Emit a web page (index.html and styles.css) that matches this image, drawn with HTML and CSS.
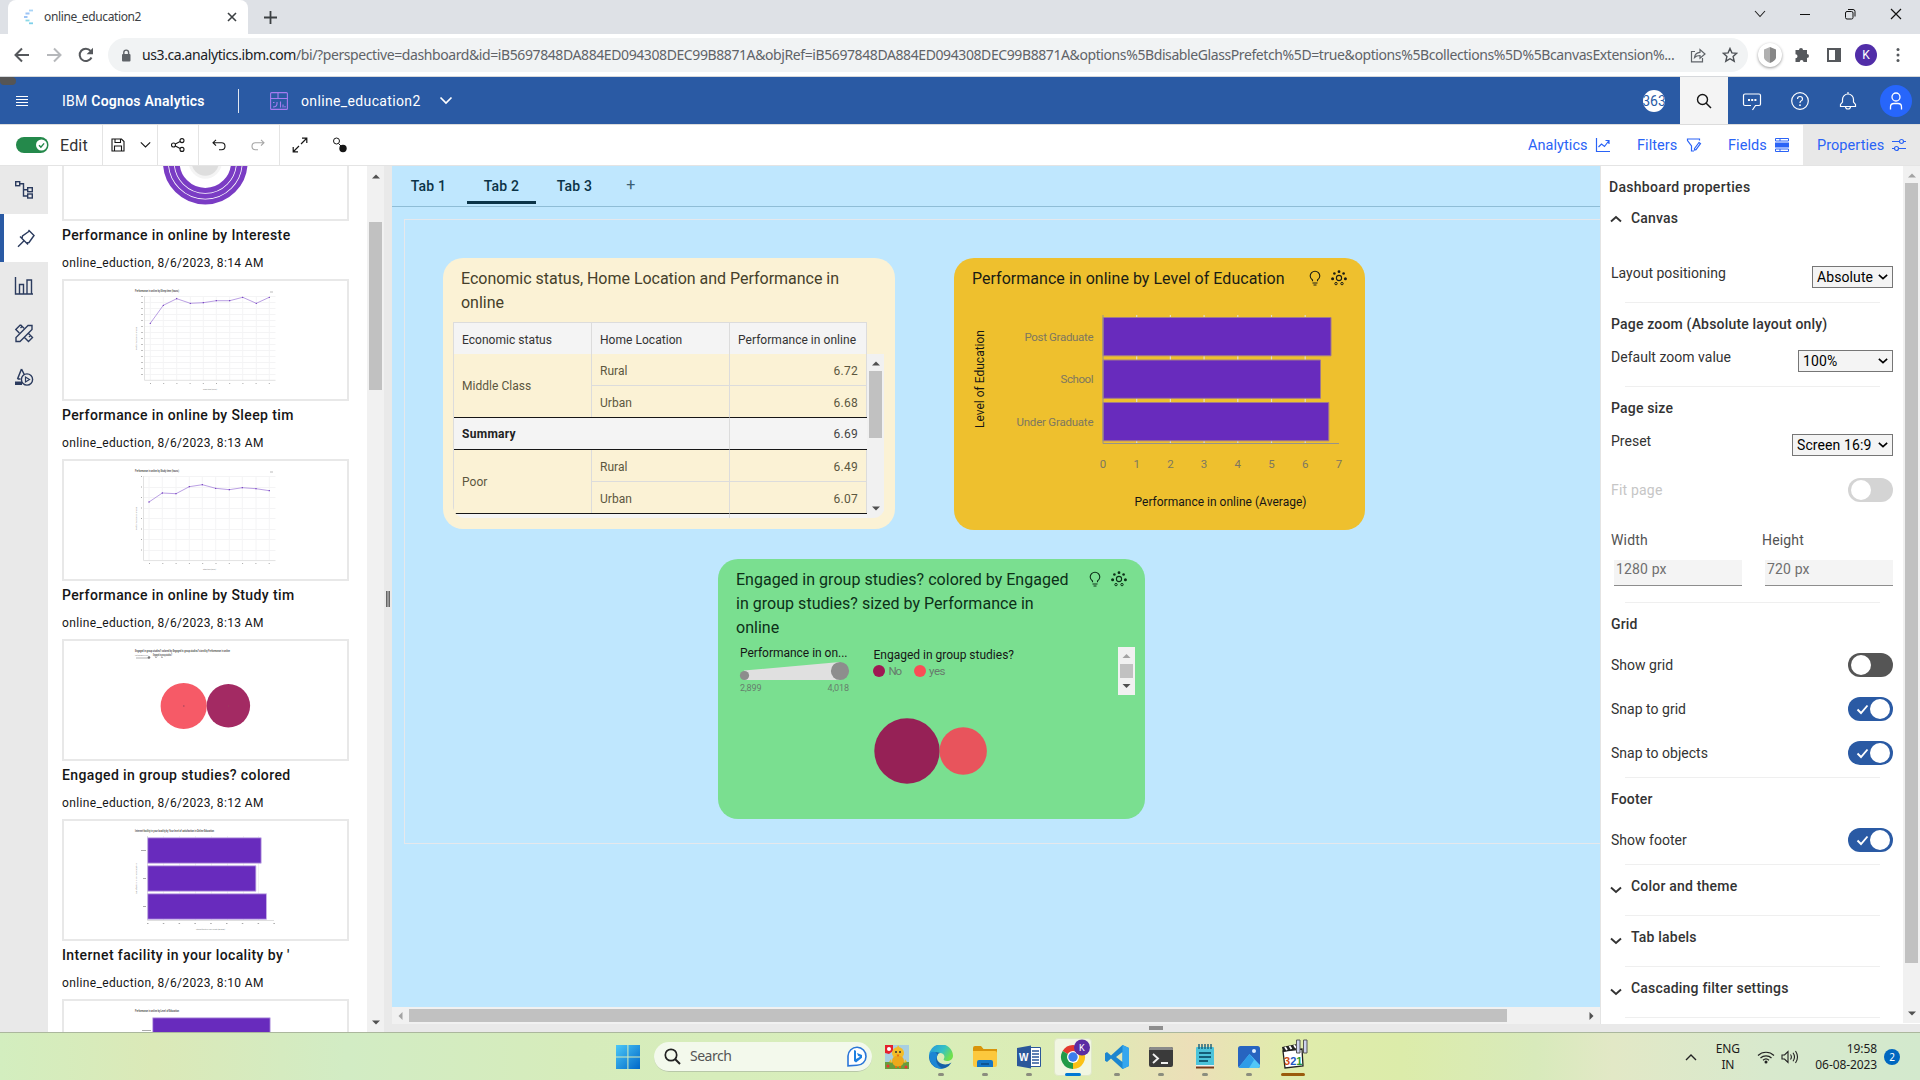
FILE: index.html
```html
<!DOCTYPE html>
<html lang="en">
<head>
<meta charset="utf-8">
<title>online_education2</title>
<link rel="stylesheet" href="styles.css">
</head>
<body>
<svg width="0" height="0" class="defs">
  <defs>
    <symbol id="bulb" viewBox="0 0 16 16"><path d="M5.500 11.200V10C4 8.900 3.200 7.600 3.200 6a4.800 4.800 0 0 1 9.600 0c0 1.600-.8 2.900-2.300 4v1.200M5.500 13h5M6.500 15h3" fill="none" stroke="currentColor" stroke-width="1.100"/></symbol>
    <symbol id="cluster" viewBox="0 0 16 16"><circle cx="8" cy="8" r="2.600" fill="none" stroke="currentColor" stroke-width="1.100"/><g fill="currentColor"><circle cx="8" cy="1.700" r="1.400"/><circle cx="3.400" cy="3.500" r="1.300"/><circle cx="12.600" cy="3.500" r="1.300"/><circle cx="1.600" cy="8.700" r="1.500"/><circle cx="14.400" cy="8.700" r="1.500"/></g><g fill="none" stroke="currentColor"><circle cx="5" cy="13.600" r="1.200"/><circle cx="11" cy="13.600" r="1.200"/></g></symbol>
    <symbol id="down" viewBox="0 0 12 12"><path d="M1 3.500 6 8l5-4.500" fill="none" stroke="currentColor" stroke-width="1.900"/></symbol>
    <symbol id="up" viewBox="0 0 12 12"><path d="M1 8.500 6 4l5 4.500" fill="none" stroke="currentColor" stroke-width="1.900"/></symbol>
  </defs>
</svg>

<div class="tabstrip">
  <div class="btab">
    <svg class="fav" width="12" height="16"><g stroke-width="1.800" fill="none"><path d="M6 1.500h4" stroke="#a8d4f7"/><path d="M2.500 4.500h4M1 8h3.500" stroke="#9cc4f5"/><path d="M2.500 11.500h4" stroke="#8bd8e6"/><path d="M6 14.300h4" stroke="#7ed0ea"/></g></svg>
    <span class="bt-title">online_education2</span>
    <svg width="10" height="10"><path d="M1 1l8 8M9 1 1 9" stroke="#3c4043" stroke-width="1.600"/></svg>
  </div>
  <svg class="newtab" width="13" height="13"><path d="M6.500 0v13M0 6.500h13" stroke="#3c4043" stroke-width="1.800"/></svg>
  <div class="winctl">
    <svg width="12" height="8"><path d="M1 1l5 5.500L11 1" fill="none" stroke="#222" stroke-width="1.100"/></svg>
    <svg width="11" height="8"><path d="M0 4.500h10" stroke="#111"/></svg>
    <svg width="11" height="11"><rect x=".5" y="2.500" width="7.500" height="7.500" rx="1.500" fill="none" stroke="#111"/><path d="M3 .5h5a2 2 0 0 1 2 2v5" fill="none" stroke="#111"/></svg>
    <svg width="12" height="12"><path d="M1 1l10 10M11 1 1 11" stroke="#111" stroke-width="1.200"/></svg>
  </div>
</div>

<div class="navbar">
  <div class="navbtns">
    <svg width="16" height="16" viewBox="0 0 16 16"><path d="M15 8H2M8 1.500 1.500 8 8 14.500" fill="none" stroke="#55585c" stroke-width="2"/></svg>
    <svg width="16" height="16" viewBox="0 0 16 16"><path d="M1 8h13M8 1.500 14.500 8 8 14.500" fill="none" stroke="#b6b8bb" stroke-width="2"/></svg>
    <svg width="16" height="16" viewBox="0 0 16 16"><path d="M13.500 10.500A6.200 6.200 0 1 1 12.600 3.800" fill="none" stroke="#55585c" stroke-width="2"/><path d="M15 .8v6.500H8.600z" fill="#55585c"/></svg>
  </div>
  <div class="url">
    <svg width="10" height="13"><rect x="1" y="5" width="8.500" height="7.500" rx="1" fill="#5f6368"/><path d="M2.800 5.500V3.500a2.400 2.400 0 0 1 4.800 0v2" fill="none" stroke="#5f6368" stroke-width="1.400"/></svg>
    <span class="urltext"><b>us3.ca.analytics.ibm.com</b>/bi/?perspective=dashboard&amp;id=iB5697848DA884ED094308DEC99B8871A&amp;objRef=iB5697848DA884ED094308DEC99B8871A&amp;options%5BdisableGlassPrefetch%5D=true&amp;options%5Bcollections%5D%5BcanvasExtension%...</span>
    <svg class="u1" width="16" height="16"><path d="M5 4.500H1.500v10.300h11V11" fill="none" stroke="#5f6368" stroke-width="1.200"/><path d="M4.500 10.500C5 7 7 5.500 10 5.300V2.500l5 4.500-5 4.300V8.500c-2.500 0-4 .4-5.500 2z" fill="none" stroke="#5f6368" stroke-width="1.200"/></svg>
    <svg width="16" height="16"><path d="M8 1.500l1.900 4.400 4.800.4-3.600 3.200 1.100 4.700L8 11.700l-4.200 2.500 1.100-4.700L1.300 6.300l4.800-.4z" fill="none" stroke="#4d5156" stroke-width="1.400"/></svg>
  </div>
  <div class="ext">
    <span class="shield"><svg width="14" height="16"><path d="M7 0 1 2.500V11q1 3 6 5z" fill="#b0b0b0"/><path d="M7 0l6 2.500V11q-1 3-6 5z" fill="#868686"/></svg></span>
    <svg width="16" height="16"><path d="M5 3a2 2 0 0 1 4 0h4v4a2 2 0 0 1 0 4v4H9.500a1.900 1.900 0 0 0-3.800 0H1.500v-3.700a2 2 0 0 0 0-4V3z" fill="#55585c"/></svg>
    <svg width="14" height="14"><rect x="1" y="1" width="12" height="12" fill="none" stroke="#55585c" stroke-width="2"/><path d="M8 1h5v12H8z" fill="#55585c"/></svg>
    <span class="kbadge">K</span>
    <svg width="4" height="16"><g fill="#55585c"><circle cx="2" cy="2.500" r="1.500"/><circle cx="2" cy="8" r="1.500"/><circle cx="2" cy="13.500" r="1.500"/></g></svg>
  </div>
</div>

<header class="appbar">
  <i class="blob"></i>
  <svg class="burger" width="12" height="12"><path d="M0 1.500h12M0 4.500h12M0 7.500h12M0 10.500h12" stroke="#fff"/></svg>
  <div class="brand">IBM <b>Cognos Analytics</b></div>
  <i class="vline"></i>
  <svg class="dash" width="18" height="18"><g fill="none" stroke="#a67cf0" stroke-width="1.100"><rect x=".6" y=".6" width="16.800" height="16.800" rx="1"/><path d="M0 6.500h18M8 .5v6M3 10.500h1.500M7 10v1.500q0 3.500-4 3.500M10.500 9.500v6M13 12.500v3M15 14v1.500"/></g></svg>
  <div class="dname">online_education2</div>
  <svg class="dchev" width="14" height="9"><path d="M1.500 1.500 7 7l5.500-5.500" fill="none" stroke="#fff" stroke-width="1.700"/></svg>
  <div class="appright">
    <span class="n363"><span>363</span></span>
    <span class="sbtn"><svg width="16" height="16"><circle cx="6.500" cy="6.500" r="5" fill="none" stroke="#161616" stroke-width="1.400"/><path d="M10 10l5 5" stroke="#161616" stroke-width="1.500"/></svg></span>
    <span class="abtn"><svg width="20" height="20" viewBox="0 0 20 20"><path d="M9 14.500H3q-1.500 0-1.500-1.500V4.500Q1.500 3 3 3h14q1.500 0 1.500 1.500V13q0 1.500-1.500 1.500h-3.500L10.500 19" fill="none" stroke="#fff" stroke-width="1.200"/><path d="M6 8h2v2H6zM9.200 8h2v2h-2zM12.400 8h2v2h-2z" fill="#fff"/></svg></span>
    <span class="abtn"><svg width="20" height="20" viewBox="0 0 20 20"><circle cx="10" cy="10" r="8.300" fill="none" stroke="#fff" stroke-width="1.200"/><path d="M7.500 8q0-2.500 2.500-2.500T12.500 8q0 1.500-1.500 2-1 .5-1 2" fill="none" stroke="#fff" stroke-width="1.200"/><circle cx="10" cy="14.200" r=".9" fill="#fff"/></svg></span>
    <span class="abtn"><svg width="20" height="20" viewBox="0 0 20 20"><path d="M10 1v2M2.500 15.500h15v-2L15.500 11V8.500a5.500 5.500 0 0 0-11 0V11l-2 2.500zM7.500 15.500a2.500 2.500 0 0 0 5 0" fill="none" stroke="#fff" stroke-width="1.200"/></svg></span>
    <span class="avatar"><svg width="20" height="20" viewBox="0 0 20 20"><circle cx="10" cy="6" r="4" fill="none" stroke="#fff" stroke-width="1.300"/><path d="M4.500 18.500V16q0-3.500 3.500-3.500h4q3.500 0 3.500 3.500v2.500" fill="none" stroke="#fff" stroke-width="1.300"/></svg></span>
  </div>
</header>

<div class="toolbar">
  <div class="tg edit">
    <svg width="33" height="16"><rect width="32.500" height="16" rx="8" fill="#24894b"/><circle cx="25.500" cy="8" r="5.500" fill="#fff"/><path d="M23 8.200l1.900 1.900 3.200-3.700" stroke="#24894b" fill="none" stroke-width="1.400"/></svg>
    <span>Edit</span>
  </div>
  <div class="tg save">
    <svg width="14" height="14"><path d="M1 1h9.500L13 3.500V13H1zM4 1v3.500h5.500V1M3.500 13V8h7v5" fill="none" stroke="#161616" stroke-width="1.100"/></svg>
    <svg width="11" height="8"><path d="M.8 1.300 5.500 6l4.700-4.700" fill="none" stroke="#161616" stroke-width="1.100"/></svg>
  </div>
  <div class="tg share"><svg width="14" height="14"><g fill="none" stroke="#161616" stroke-width="1.100"><circle cx="2.500" cy="7" r="2"/><circle cx="11" cy="2.600" r="2"/><circle cx="11" cy="11.400" r="2"/><path d="M4.300 6l4.900-2.500M4.300 8l4.900 2.500"/></g></svg></div>
  <div class="tg undo">
    <svg width="14" height="12"><path d="M4 .8 1 3.700l3 3M1 3.700h8.500Q13 3.700 13 7.200t-3.500 3.500H7" fill="none" stroke="#161616" stroke-width="1.100"/></svg>
    <svg width="14" height="12"><path d="M10 .8l3 2.900-3 3M13 3.700H4.500Q1 3.700 1 7.200t3.500 3.500H7" fill="none" stroke="#a5a5a5" stroke-width="1.100"/></svg>
  </div>
  <div class="tg last">
    <svg width="16" height="16"><path d="M10 1.200h4.800V6M6 14.800H1.200V10M14.500 1.500 9 7M1.500 14.500 7 9" fill="none" stroke="#161616" stroke-width="1.200"/></svg>
    <svg width="16" height="16"><circle cx="4.500" cy="4" r="3" fill="none" stroke="#161616"/><path d="M6.500 6.500 9 9" stroke="#161616"/><circle cx="11" cy="11.500" r="3.700" fill="#161616"/></svg>
  </div>
  <div class="tools">
    <div class="tool"><span>Analytics</span><svg width="16" height="16"><path d="M1.500 1v13.500H15M3.500 10l3-3 3 2.500 4.500-6M10.500 3.500H14V7" fill="none" stroke="#2a63f6" stroke-width="1.200"/></svg></div>
    <div class="tool"><span>Filters</span><svg width="16" height="16"><path d="M8 14H5.500V9L1.500 3.500V2h12v1.500M8.500 11.500l4.500-6 1.500 1.200-4.500 6-1.500.3z" fill="none" stroke="#2a63f6" stroke-width="1.200"/></svg></div>
    <div class="tool"><span>Fields</span><svg width="16" height="16"><path d="M1 5.500h14v5H1z" fill="#2a63f6"/><path d="M1.500 1.500h13V4h-13zM1.500 12h13v2.500h-13zM6 1.500V4M6 12v2.500" fill="none" stroke="#2a63f6"/></svg></div>
    <div class="tool on"><span>Properties</span><svg width="16" height="16"><g fill="none" stroke="#2a63f6" stroke-width="1.200"><circle cx="10.500" cy="4.500" r="2"/><circle cx="5.500" cy="11.500" r="2"/><path d="M1 4.500h7.500M12.500 4.500H15M1 11.500h2.500M7.500 11.500H15"/></g></svg></div>
  </div>
</div>

<main class="body">
  <nav class="rail">
    <div class="ri"><svg width="20" height="20"><g fill="none" stroke="#2b3b5e" stroke-width="1.400"><rect x="1.700" y="1.700" width="4" height="4"/><rect x="13.700" y="7.700" width="4.600" height="4"/><rect x="13.700" y="14" width="4.600" height="4"/><path d="M5.700 3.700H9.500V16h4.200M9.500 9.700h4.200"/></g></svg></div>
    <div class="ri on"><svg width="20" height="20"><path d="M12.500 2l6 6M13.500 3 6.500 8l-.5 2.500 4.500 4.500 2.500-.5 5-7M4 8.500l8 8M8 12.700 2 18.700" fill="none" stroke="#2b3b5e" stroke-width="1.400"/></svg></div>
    <div class="ri"><svg width="20" height="20"><path d="M1.500 1v17H19M5.500 18V8.500h4V18M13 18V4h4.500v14" fill="none" stroke="#2b3b5e" stroke-width="1.400"/></svg></div>
    <div class="ri r4"><svg width="20" height="20"><path d="M14 2.500 2 14.500V18.500h4L18 6.500V2.500zM6.500 1.800 1.800 6.500l3.500 3.500M10 5.300 6.500 1.800M10.500 14.500l4 4 4-4-4-4M8 3.500 6.500 5M16.500 12.500 15 14" fill="none" stroke="#2b3b5e" stroke-width="1.400"/></svg></div>
    <div class="ri r5"><svg width="20" height="20"><path d="M7.500 2 3.500 12M7.500 2l3 6M3.500 12h3" fill="none" stroke="#2b3b5e" stroke-width="1.500"/><path d="M1 14.500h7V18H1z" fill="#2b3b5e"/><circle cx="13" cy="12.500" r="5.600" fill="#e9e9e9" stroke="#2b3b5e" stroke-width="1.400"/><path d="M11.500 10v5l4-2.500z" fill="none" stroke="#2b3b5e" stroke-width="1.200"/></svg></div>
  </nav>

  <section class="pins">
    <div class="pinlist">
      <article class="pin">
        <svg class="thumb" viewBox="2 2 283 118"><g fill="none" stroke="#7a3cc4" stroke-width="5"><circle cx="143.300" cy="63.200" r="39.800"/><circle cx="143.300" cy="63.200" r="34"/><circle cx="143.300" cy="63.200" r="28.200"/></g><circle cx="143.300" cy="63.200" r="16.500" fill="#f4f4f4"/><circle cx="143.300" cy="63.200" r="13.600" fill="#dedede"/></svg>
        <h4>Performance in online by Intereste</h4><p>online_eduction, 8/6/2023, 8:14 AM</p>
      </article>
      <article class="pin">
        <svg class="thumb" viewBox="2 2 283 118">
          <text x="73" y="13.300" class="tt" textLength="44" lengthAdjust="spacingAndGlyphs">Performance in online by Sleep time (hours)</text>
          <path d="M82.500 17.500h131M82.500 23.500h131M82.500 29.500h131M82.500 35.500h131M82.500 41.500h131M82.500 47.500h131M82.500 53.500h131M82.500 59.500h131M82.500 65.500h131M82.500 71.500h131M82.500 77.500h131M82.500 83.500h131M82.500 89.500h131M82.500 95.500h131M88.300 17v84M101.300 17v84M114.700 17v84M128.300 17v84M141.300 17v84M154.300 17v84M167.700 17v84M180.700 17v84M194.300 17v84M207.300 17v84" stroke="#f4f4f5" fill="none"/>
          <path d="M82.500 17v84.300H213.500" fill="none" stroke="#e2e2e2"/>
          <path d="M88.300 44.300 101.300 26.300 114.700 19.700 128.300 24.300 141.300 23.700 154.300 21.700H167.700L180.700 18.300 194.300 24.300 207.300 18.300" fill="none" stroke="#8b5fd0" stroke-width=".6"/>
          <path class="pts" d="M88.300 44.300h0M101.300 26.300h0M114.700 19.700h0M128.300 24.300h0M141.300 23.700h0M154.300 21.700h0M167.700 21.700h0M180.700 18.300h0M194.300 24.300h0M207.300 18.300h0"/>
          <path d="M80 17v84" stroke="#aaa" stroke-dasharray="1 5" stroke-width="1.500"/><path d="M88 104.500h121" stroke="#aaa" stroke-dasharray="1 12.200"/><path d="M208 13h3" stroke="#bbb"/>
          <text class="tl" transform="translate(75 71) rotate(-90)" textLength="23" lengthAdjust="spacingAndGlyphs">Performance in online</text><text class="tl" x="141" y="111" textLength="14" lengthAdjust="spacingAndGlyphs">Sleep time (hours)</text>
        </svg>
        <h4>Performance in online by Sleep tim</h4><p>online_eduction, 8/6/2023, 8:13 AM</p>
      </article>
      <article class="pin">
        <svg class="thumb" viewBox="2 2 283 118">
          <text x="73" y="13.300" class="tt" textLength="44" lengthAdjust="spacingAndGlyphs">Performance in online by Study time (hours)</text>
          <path d="M81.500 17.500h132M81.500 28.500h132M81.500 38.500h132M81.500 49.500h132M81.500 59.500h132M81.500 70.500h132M81.500 80.500h132M81.500 91.500h132M87 17v84M100.300 17v84M114 17v84M127.300 17v84M140.300 17v84M153.700 17v84M167.300 17v84M180.300 17v84M194 17v84M207.300 17v84" stroke="#f4f4f5" fill="none"/>
          <path d="M81.500 17v84.600H213.500" fill="none" stroke="#e2e2e2"/>
          <path d="M87 43 100.300 34 114 34.700 127.300 27.700 140.300 25.700 153.700 29.300 167.300 30.700 180.300 28.700 194 29.700 207.300 31.700" fill="none" stroke="#8b5fd0" stroke-width=".6"/>
          <path class="pts" d="M87 43h0M100.300 34h0M114 34.700h0M127.300 27.700h0M140.300 25.700h0M153.700 29.300h0M167.300 30.700h0M180.300 28.700h0M194 29.700h0M207.300 31.700h0"/>
          <path d="M79.500 17v84" stroke="#aaa" stroke-dasharray="1 9.500"/><path d="M87 104.500h121" stroke="#aaa" stroke-dasharray="1 12.300"/><path d="M208 13h3" stroke="#bbb"/>
          <text class="tl" transform="translate(75 71) rotate(-90)" textLength="23" lengthAdjust="spacingAndGlyphs">Performance in online</text><text class="tl" x="141" y="111" textLength="13" lengthAdjust="spacingAndGlyphs">Study time (hours)</text>
        </svg>
        <h4>Performance in online by Study tim</h4><p>online_eduction, 8/6/2023, 8:13 AM</p>
      </article>
      <article class="pin">
        <svg class="thumb" viewBox="2 2 283 118">
          <text x="73" y="13.300" class="tt" textLength="95" lengthAdjust="spacingAndGlyphs">Engaged in group studies? colored by Engaged in group studies? sized by Performance in online</text>
          <text x="73" y="16.800" class="tl" textLength="14" lengthAdjust="spacingAndGlyphs">Performance in on...</text><text x="91" y="16.800" class="tt" textLength="19" lengthAdjust="spacingAndGlyphs">Engaged in group studies?</text><path d="M74 19h13" stroke="#ccc" stroke-width="1.500"/><circle cx="87" cy="18.500" r="1.300" fill="#777"/><path d="M93 18.500h2M99 18.500h2" stroke="#bbb"/>
          <circle cx="121.700" cy="67" r="23.100" fill="#f65a67"/><circle cx="166.400" cy="66.800" r="21.700" fill="#a32a63"/><path d="M121 67h1.500M166 67h1" stroke="#99405a"/>
        </svg>
        <h4>Engaged in group studies? colored</h4><p>online_eduction, 8/6/2023, 8:12 AM</p>
      </article>
      <article class="pin">
        <svg class="thumb" viewBox="2 2 283 118">
          <text x="73" y="13.300" class="tt" textLength="79" lengthAdjust="spacingAndGlyphs">Internet facility in your locality by Your level of satisfaction in Online Education</text>
          <path d="M101.500 17v84M117.500 17v84M133.500 17v84M149.500 17v84M165.500 17v84M181.500 17v84M196.500 17v84" stroke="#f2f2f2"/>
          <path d="M85.500 17v84.500H212" fill="none" stroke="#dedede"/>
          <g fill="#682bbd" stroke="#c9b5e8" stroke-width=".8"><path d="M85.700 18.800h113.500v25.400H85.700zM85.700 46.800h108.200v25.400H85.700zM85.700 74.800h118.800v25.400H85.700z"/></g>
          <path d="M79 31.500h5M81 59.500h3M81 87.500h3" stroke="#aaa"/><path d="M85 104.500h128" stroke="#aaa" stroke-dasharray="1.500 14.300"/>
          <text class="tl" transform="translate(75 75) rotate(-90)" textLength="31" lengthAdjust="spacingAndGlyphs">Satisfaction in online education</text><text class="tl" x="134" y="110.500" textLength="29" lengthAdjust="spacingAndGlyphs">Internet facility in your locality (Average)</text>
        </svg>
        <h4>Internet facility in your locality by '</h4><p>online_eduction, 8/6/2023, 8:10 AM</p>
      </article>
      <article class="pin">
        <svg class="thumb" viewBox="2 2 283 118">
          <text x="73" y="13.300" class="tt" textLength="44" lengthAdjust="spacingAndGlyphs">Performance in online by Level of Education</text>
          <path d="M90.700 18.800h117.500v25.400H90.700z" fill="#682bbd" stroke="#c9b5e8" stroke-width=".8"/><path d="M80 31.500h9" stroke="#aaa"/>
        </svg>
      </article>
    </div>
    <div class="vscroll"><svg width="8" height="5" class="au"><path d="M0 4.500 4 .5l4 4z" fill="#505050"/></svg><i class="thumbbar"></i><svg width="8" height="5" class="ad"><path d="M0 .5l4 4 4-4z" fill="#505050"/></svg></div>
  </section>
  <div class="split"><i></i></div>

  <div class="work">
    <div class="upper">
      <section class="canvas">
        <div class="tabs"><span>Tab 1</span><span class="on">Tab 2</span><span>Tab 3</span><span class="plus">+</span></div>
        <div class="page">
          <div class="frame">
            <div class="widget w1">
              <div class="wt">Economic status, Home Location and Performance in<br>online</div>
              <div class="tablewrap">
                <div class="thead"><span>Economic status</span><span>Home Location</span><span>Performance in online</span></div>
                <div class="trows">
                  <div class="grid">
                    <span class="g2">Middle Class</span><span>Rural</span><span class="num">6.72</span><span>Urban</span><span class="num">6.68</span>
                    <span class="sum">Summary</span><span class="num sumn">6.69</span>
                    <span class="g2">Poor</span><span>Rural</span><span class="num">6.49</span><span>Urban</span><span class="num">6.07</span>
                    <span class="sum"></span><span class="num sumn"></span>
                  </div>
                  <div class="vscroll tv"><svg width="8" height="5"><path d="M0 4.500 4 .5l4 4z" fill="#505050"/></svg><i></i><svg class="end" width="8" height="5"><path d="M0 .5l4 4 4-4z" fill="#505050"/></svg></div>
                </div>
              </div>
            </div>
            <div class="widget w2">
              <div class="whead"><div class="wt">Performance in online by Level of Education</div><svg width="16" height="16"><use href="#bulb"/></svg><svg width="16" height="16"><use href="#cluster"/></svg></div>
              <svg class="chart" width="411" height="230" viewBox="954 300 411 230">
                <path d="M1136.700 315v128M1170.400 315v128M1204.100 315v128M1237.800 315v128M1271.500 315v128M1305.200 315v128" stroke="#e3dcc9" stroke-width="1.200"/>
                <g fill="#682bbd" stroke="#a07a8c" stroke-width="1"><path d="M1103 317.500h228v38.300h-228zM1103 360h217.500v38.300H1103zM1103 402.500h225.800v38.300H1103z"/></g>
                <path d="M1103 315v128.500h236" fill="none" stroke="#97938a"/>
                <g class="al" text-anchor="end"><text x="1093.500" y="341" textLength="69">Post Graduate</text><text x="1093.500" y="383" textLength="33">School</text><text x="1093.500" y="426" textLength="77">Under Graduate</text></g>
                <g class="al" text-anchor="middle"><text x="1103" y="468">0</text><text x="1136.700" y="468">1</text><text x="1170.400" y="468">2</text><text x="1204.100" y="468">3</text><text x="1237.800" y="468">4</text><text x="1271.500" y="468">5</text><text x="1305.200" y="468">6</text><text x="1339" y="468">7</text></g>
                <text class="at" x="1134.500" y="506" textLength="172">Performance in online (Average)</text>
                <text class="at" transform="translate(983.500 428) rotate(-90)" textLength="98">Level of Education</text>
              </svg>
            </div>
            <div class="widget w3">
              <div class="whead"><div class="wt">Engaged in group studies? colored by Engaged<br>in group studies? sized by Performance in<br>online</div><svg width="16" height="16"><use href="#bulb"/></svg><svg width="16" height="16"><use href="#cluster"/></svg></div>
              <svg class="chart" width="427" height="177" viewBox="718 642 427 177">
                <text class="at" x="740" y="657" textLength="107.500">Performance in on...</text>
                <path d="M744 670.500 840 662v18h-96z" fill="#e0e0e0"/><circle cx="744.500" cy="675.500" r="4.600" fill="#8d8d8d"/><circle cx="840" cy="671" r="9.100" fill="#8d8d8d"/>
                <text class="sl" x="740" y="691" textLength="21.500">2,899</text><text class="sl" x="827.500" y="691" textLength="21.500">4,018</text>
                <text class="at" x="873.500" y="659" textLength="140.500">Engaged in group studies?</text>
                <circle cx="879" cy="671" r="6" fill="#9f1853"/><circle cx="920" cy="671" r="6" fill="#fa4d56"/>
                <text class="al" x="888.500" y="675" textLength="13.500">No</text><text class="al" x="929" y="675" textLength="16.500">yes</text>
                <path d="M1118 647h17v48h-17z" fill="#f1f1f1"/><path d="M1120 664h13v14h-13z" fill="#c1c1c1"/><path d="M1122.500 658l4-4 4 4z" fill="#a3a3a3"/><path d="M1122.500 684l4 4 4-4z" fill="#505050"/>
                <circle cx="907" cy="751" r="32.700" fill="#962156"/><circle cx="963.200" cy="751" r="23.700" fill="#e8545c"/>
              </svg>
            </div>
          </div>
        </div>
        <div class="hscroll"><svg width="5" height="8"><path d="M4.500 0 .5 4l4 4z" fill="#a3a3a3"/></svg><i></i><svg width="5" height="8"><path d="M.5 0l4 4-4 4z" fill="#505050"/></svg></div>
      </section>

      <aside class="props">
        <div class="plist">
          <div class="ptitle">Dashboard properties</div>
          <div class="acc first"><svg width="12" height="12"><use href="#up"/></svg>Canvas</div>
          <div class="prow r-lay"><span>Layout positioning</span><span class="sel s1">Absolute<svg width="10" height="10" viewBox="0 0 12 12"><use href="#down"/></svg></span></div>
          <hr>
          <div class="psub">Page zoom (Absolute layout only)</div>
          <div class="prow"><span>Default zoom value</span><span class="sel s2">100%<svg width="10" height="10" viewBox="0 0 12 12"><use href="#down"/></svg></span></div>
          <hr>
          <div class="psub">Page size</div>
          <div class="prow r-pre"><span>Preset</span><span class="sel s3">Screen 16:9<svg width="10" height="10" viewBox="0 0 12 12"><use href="#down"/></svg></span></div>
          <div class="trow dis"><span>Fit page</span><i class="tog"><b></b></i></div>
          <div class="dims"><label>Width<span>1280 px</span></label><label>Height<span>720 px</span></label></div>
          <hr>
          <div class="psub long">Grid</div>
          <div class="trow"><span>Show grid</span><i class="tog"><b></b></i></div>
          <div class="trow"><span>Snap to grid</span><i class="tog on"><svg width="13" height="11"><path d="M1.500 5.500 5 9l6.500-7.500" fill="none" stroke="#fff" stroke-width="1.900"/></svg><b></b></i></div>
          <div class="trow"><span>Snap to objects</span><i class="tog on"><svg width="13" height="11"><path d="M1.500 5.500 5 9l6.500-7.500" fill="none" stroke="#fff" stroke-width="1.900"/></svg><b></b></i></div>
          <hr class="tight">
          <div class="psub long">Footer</div>
          <div class="trow"><span>Show footer</span><i class="tog on"><svg width="13" height="11"><path d="M1.500 5.500 5 9l6.500-7.500" fill="none" stroke="#fff" stroke-width="1.900"/></svg><b></b></i></div>
          <hr class="tight">
          <div class="acc"><svg width="12" height="12"><use href="#down"/></svg>Color and theme</div><hr>
          <div class="acc"><svg width="12" height="12"><use href="#down"/></svg>Tab labels</div><hr>
          <div class="acc"><svg width="12" height="12"><use href="#down"/></svg>Cascading filter settings</div><hr>
        </div>
        <div class="vscroll pv"><svg width="8" height="5"><path d="M0 4.500 4 .5l4 4z" fill="#a3a3a3"/></svg><i></i><svg class="end" width="8" height="5"><path d="M0 .5l4 4 4-4z" fill="#505050"/></svg></div>
      </aside>
    </div>
    <div class="hsplit"><i></i></div>
  </div>
</main>

<footer class="taskbar">
  <div class="task win"><svg width="24" height="24"><defs><linearGradient id="wg" x1="0" y1="0" x2="1" y2="1"><stop offset="0" stop-color="#4cc8f7"/><stop offset="1" stop-color="#0067c8"/></linearGradient></defs><path d="M0 0h11.400v11.400H0zM12.400 0H24v11.400H12.400zM0 12.400h11.400V24H0zM12.400 12.400H24V24H12.400z" fill="url(#wg)"/></svg></div>
  <div class="search"><svg width="17" height="17"><circle cx="7" cy="7" r="5.700" fill="none" stroke="#222" stroke-width="1.700"/><path d="M11 11l5 5" stroke="#222" stroke-width="2"/></svg><span>Search</span><svg width="20" height="21"><path d="M1 19.800V10a9 9 0 1 1 9 9.300z" fill="#fff" stroke="#2a76d8" stroke-width="1.600"/><path d="M7 4l2 .8V13l4-2.300-2-1-1-2.700 5 2v2.800L9 16.500 7 15z" fill="#1c7fe0"/></svg></div>
  <div class="task"><svg width="24" height="24"><path d="M0 0h24v24H0z" fill="#a8cfe0"/><path d="M0 17h24v7H0z" fill="#6a9c3c"/><path d="M0 0h8v6l-4 3-4-1z" fill="#e5202c"/><circle cx="4" cy="4" r="2" fill="#fff"/><circle cx="13" cy="8" r="6" fill="#f3bd28"/><ellipse cx="13" cy="16" rx="6" ry="5.500" fill="#eda91c"/><path d="M12 2.500 13 0l1.500 2.500M6 14l-2 3 3 1M20 14l2 3-3 1" fill="#f3bd28"/><circle cx="11" cy="7" r="1" fill="#333"/><circle cx="15" cy="7" r="1" fill="#333"/><path d="M11.500 9.500h3L13 12z" fill="#e46a12"/><path d="M10 21h2v2h-2zM14 21h2v2h-2z" fill="#e46a12"/><circle cx="3" cy="21" r="1.500" fill="#e33"/><circle cx="21" cy="22" r="1.500" fill="#e33"/></svg></div>
  <div class="task run"><svg width="24" height="24"><defs><linearGradient id="eg" x1="0" y1="0" x2="1" y2=".5"><stop offset="0" stop-color="#2493e0"/><stop offset=".6" stop-color="#35c1c4"/><stop offset="1" stop-color="#6fe04e"/></linearGradient></defs><path d="M0 12A12 12 0 0 1 24 10.500C24 14.500 21 16 18 16c-3 0-4-1-3-2.500 1.500-3-1-5.500-4-5.500C5 8 1.500 10 0 12z" fill="url(#eg)"/><path d="M0 12C2 7 8 6.500 11 8c-4 1-4.500 7 0 10 3 2 8 2 11.500-.5A12 12 0 0 1 0 12z" fill="#1460a8"/><path d="M8.500 10.500C5 16 9 22 14 23.800A12 12 0 0 1 1 8c3-2.500 7-1.500 7.500 2.500z" fill="#1b86d4"/></svg></div>
  <div class="task run"><svg width="24" height="24"><path d="M0 3q0-2 2-2h6l2.500 3H24v5H0z" fill="#d9940a"/><path d="M0 6h22q2 0 2 2v12q0 2-2 2H2q-2 0-2-2z" fill="#fcc83d"/><path d="M4 17q0-2 2-2h12q2 0 2 2v5H4z" fill="#1476c6"/><path d="M8 18h8v2H8z" fill="#0c5594"/></svg></div>
  <div class="task run"><svg width="24" height="24"><path d="M12 2.500h11.500v19H12z" fill="#fff" stroke="#2b579a"/><path d="M15 6h7M15 9h7M15 12h7M15 15h7M15 18h7" stroke="#2b579a" stroke-width="1.300"/><path d="M0 3 14 .5v23L0 21z" fill="#2b579a"/><text x="2" y="16" class="wd">W</text></svg></div>
  <div class="task run active"><svg width="36" height="30" viewBox="-6 -6 36 30"><path d="M12 12 1.600 6A12 12 0 0 1 22.400 6z" fill="#e33b2e"/><path d="M12 12 22.400 6A12 12 0 0 1 12 24z" fill="#fbc116"/><path d="M12 12v12A12 12 0 0 1 1.600 6z" fill="#229a48"/><circle cx="12" cy="12" r="6" fill="#fff"/><circle cx="12" cy="12" r="4.700" fill="#3b7ded"/><circle cx="21" cy="2.500" r="8" fill="#5b2da3"/><text x="18" y="6" class="ck">K</text></svg></div>
  <div class="task run"><svg width="24" height="24"><path d="M17.500 0 24 3v18l-6.500 3L6 13.500 2 17l-2-1.200V8.200L2 7l4 3.500zM17.500 7 11 12l6.500 5z" fill="#1c86cf" fill-rule="evenodd"/><path d="M17.500 0 24 3v18l-6.500 3z" fill="#34a6ee"/></svg></div>
  <div class="task run"><svg width="24" height="22"><rect y="1" width="24" height="20" rx="2" fill="#3a3a3a"/><path d="M0 4V3q0-2 2-2h20q2 0 2 2v1z" fill="#8a8a8a"/><path d="M4 8l5 4.500L4 17M12 17h7" fill="none" stroke="#eee" stroke-width="1.900"/></svg></div>
  <div class="task run"><svg width="20" height="25"><rect x="1" y="3" width="18" height="20" rx="1" fill="#4cc3da"/><path d="M1 22h18v2.500H1z" fill="#7c3a18"/><path d="M1 21h18v1.500H1z" fill="#eee"/><path d="M4 0v5M7 0v5M10 0v5M13 0v5M16 0v5" stroke="#185d78" stroke-width="1.400"/><path d="M4 9h12M4 13h12M4 17h9" stroke="#145e78" stroke-width="1.900"/></svg></div>
  <div class="task run"><svg width="22" height="24"><rect y="1" width="22" height="22" rx="2.500" fill="#2764c0"/><path d="M1 22 11.500 9 22 20v1q0 2-2 2H3z" fill="#52c7f7"/><path d="M11 23l5-8-4.500-6L1 22q1 1 2 1z" fill="#2e9ce8"/><circle cx="16" cy="6" r="2" fill="#dceeff"/></svg></div>
  <div class="task run clap"><svg width="28" height="30"><path d="M2 12 21 10l1 17-18 2z" fill="#fff" stroke="#222" stroke-width="1.300"/><path d="M1 8 16 5l1 5-15 3z" fill="#222"/><path d="M4 8l2 3M8.500 7l2 3M13 6l2 3" stroke="#fff" stroke-width="1.800"/><path d="M15.500 1H19v13h-3.500zM22.500 1H26v13h-3.500z" fill="#cdd3ee" stroke="#555"/><text x="3" y="26" class="n"><tspan fill="#d04b12">3</tspan><tspan fill="#2456c4">2</tspan><tspan fill="#249a33">1</tspan></text></svg></div>
  <div class="tray">
    <svg width="12" height="8"><path d="M1 7l5-5 5 5" fill="none" stroke="#222" stroke-width="1.400"/></svg>
    <div class="lang">ENG<br>IN</div>
    <svg width="18" height="14"><g fill="none" stroke="#222" stroke-width="1.200"><path d="M1 5.500a11.500 11.500 0 0 1 16 0M3.500 8a8 8 0 0 1 11 0M6 10.300a4.500 4.500 0 0 1 6 0"/></g><circle cx="9" cy="12" r="1.500" fill="#222"/></svg>
    <svg class="spk" width="18" height="14"><path d="M1 5h2.500L7 1.500v11L3.500 9H1zM9.500 4.500q1.800 2.500 0 5M12 2.800q3 4.200 0 8.400M14.500 1q4 6 0 12" fill="none" stroke="#222" stroke-width="1.100"/></svg>
    <div class="clock">19:58<br>06-08-2023</div>
    <span class="two">2</span>
  </div>
</footer>
</body>
</html>
```
FILE: styles.css
```css
* { box-sizing: border-box; }
body { margin: 0; width: 1920px; height: 1080px; overflow: hidden; display: flex; flex-direction: column; font-family: Roboto, "Liberation Sans", sans-serif; color: #161616; background: #fff; }
svg { display: block; flex: none; }
i { flex: none; }
.defs { position: absolute; }

/* browser chrome */
.tabstrip { height: 34px; background: #dee1e6; display: flex; align-items: center; flex: none; padding-left: 8px; font-family: "Noto Sans", sans-serif; }
.btab { width: 240px; height: 34px; background: #fff; border-radius: 8px 8px 0 0; display: flex; align-items: center; padding: 0 11px 0 15px; }
.bt-title { flex: 1; font-size: 12px; letter-spacing: -.37px; margin: -1px 0 0 9px; color: #3c4043; }
.newtab { margin-left: 16px; }
.winctl { margin-left: auto; display: flex; align-items: center; gap: 34px; padding: 0 18px 6px 0; }
.navbar { height: 43px; flex: none; display: flex; align-items: center; border-bottom: 1px solid #d6d8db; padding-left: 14px; }
.navbtns { display: flex; gap: 16px; width: 94px; }
.url { width: 1640px; height: 34px; border-radius: 17px; background: #f1f3f4; display: flex; align-items: center; padding: 0 9px 0 13px; }
.urltext { font: 14px "Noto Sans", sans-serif; letter-spacing: -.405px; color: #5f6368; margin: -1px 0 0 11px; white-space: nowrap; width: 1534px; }
.urltext b { font-weight: 400; color: #202124; }
.u1 { margin: 0 16px 0 14px; }
.ext { display: flex; align-items: center; margin-left: 10px; }
.shield { width: 24px; height: 24px; border-radius: 50%; background: #fff; box-shadow: 0 1px 3px #999; display: flex; align-items: center; justify-content: center; margin-right: 12px; }
.ext > svg:nth-child(2) { margin-right: 17px; }
.kbadge { width: 22px; height: 22px; border-radius: 50%; background: #512da8; color: #fff; font-size: 12px; text-align: center; line-height: 22px; margin: 0 19px 0 14px; }

/* application header */
.appbar { height: 47px; flex: none; background: #2a5aa4; color: #fff; display: flex; align-items: center; position: relative; padding-left: 16px; font-size: 14px; }
.blob { position: absolute; left: 0; top: 0; width: 16px; height: 8px; background: #555; border-radius: 0 4px 4px 4px; }
.burger { margin-right: 34px; }
.brand { width: 176px; letter-spacing: .26px; white-space: nowrap; }
.brand b { font-weight: 600; }
.vline { width: 1px; height: 24px; background: #e0e6f0; margin-right: 31px; }
.dname { width: 138px; margin-left: 13px; letter-spacing: .36px; }
.appright { margin-left: auto; display: flex; align-items: center; height: 47px; }
.n363 { width: 22px; height: 22px; border-radius: 50%; background: #fff; color: #2a5aa4; margin-right: 15px; display: flex; justify-content: center; align-items: center; overflow: hidden; }
.sbtn { width: 48px; height: 47px; background: #f4f4f4; display: flex; align-items: center; justify-content: center; }
.abtn { width: 48px; display: flex; justify-content: center; }
.avatar { width: 32px; height: 32px; border-radius: 50%; background: #2766fb; display: flex; align-items: center; justify-content: center; margin: 0 8px; }

/* toolbar */
.toolbar { height: 42px; flex: none; border-top: 1px solid #dcdcdc; border-bottom: 1px solid #e4e4e4; display: flex; background: #fff; }
.tg { display: flex; align-items: center; border-right: 1px solid #e4e4e4; }
.edit { width: 103px; padding-left: 16px; gap: 11px; font-size: 16px; color: #333; }
.edit span { letter-spacing: .2px; }
.save { width: 55px; padding-left: 8px; gap: 15px; }
.share { width: 41px; justify-content: center; }
.undo { width: 81px; padding-left: 13px; gap: 25px; }
.last { border: 0; padding-left: 12px; gap: 24px; }
.tools { margin-left: auto; display: flex; color: #2a63f6; font-size: 14.500px; letter-spacing: .06px; }
.tool { display: flex; align-items: center; justify-content: space-between; width: 83px; margin-right: 26px; }
.tool:nth-child(2) { width: 65px; }
.tool:nth-child(3) { width: 62px; margin-right: 13px; }
.tool.on { width: 117px; background: #e8e8e8; margin: 0; padding: 0 13px 0 14px; }

/* body */
.body { flex: 1; display: flex; min-height: 0; }
.rail { width: 48px; background: #e9e9e9; }
.ri { height: 48px; display: flex; align-items: center; justify-content: center; }
.ri.on { background: #fff; border-left: 4px solid #2a5aa4; }
.ri.r4 { height: 46px; }
.ri.r5 { height: 44px; }
.ri.r5 svg { margin-top: -2px; }
.pins { width: 336px; display: flex; overflow: hidden; }
.pinlist { width: 319px; padding-left: 14px; margin-top: -67px; background: #fff; }
.pin { height: 180px; }
.thumb { width: 287px; height: 122px; border: 2px solid #e8e8e8; }
.pin h4 { margin: 4px 0 0; width: 238px; height: 20px; font-size: 14px; line-height: 20px; font-weight: 500; letter-spacing: .39px; white-space: nowrap; }
.pin p { margin: 9px 0 0; font-size: 12px; line-height: 18px; letter-spacing: .36px; }
.tt { font-size: 3px; font-weight: 700; fill: #555; }
.tl { font-size: 2.500px; fill: #777; }
.pts { stroke: #682bbd; stroke-width: 1.300; stroke-linecap: round; fill: none; }
.vscroll { width: 17px; background: #f1f1f1; display: flex; flex-direction: column; align-items: center; flex: none; }
.au { margin-top: 8px; }
.thumbbar { width: 13px; height: 168px; background: #c1c1c1; margin-top: 43px; }
.ad { margin: auto 0 7px; }
.split { width: 8px; background: #e9e9e9; display: flex; align-items: center; justify-content: center; }
.split i { width: 4px; height: 16px; background: #999; border: solid #666; border-width: 0 1px; }
.work { flex: 1; display: flex; flex-direction: column; min-width: 0; }
.upper { height: 858px; display: flex; }
.hsplit { height: 8px; background: #e9e9e9; padding: 2px 0 0 757px; }
.hsplit i { display: block; width: 14px; height: 4px; background: #8e8e8e; }

/* canvas */
.canvas { width: 1208px; background: #bfe7fe; display: flex; flex-direction: column; }
.tabs { height: 41px; border-bottom: 1px solid #8fbdd6; display: flex; padding-left: 2px; color: #0b3347; font-size: 14px; font-weight: 500; }
.tabs span { width: 69px; margin-right: 4px; height: 38px; line-height: 41px; text-align: center; letter-spacing: .2px; }
.tabs .on { border-bottom: 3px solid #0b3347; }
.tabs .plus { width: 36px; font-size: 16px; font-weight: 400; line-height: 38px; color: #3c6074; }
.page { height: 800px; padding: 12px 0 0 12px; }
.frame { height: 625px; border: 1px solid #e6e8ec; border-right: 0; position: relative; }
.hscroll { height: 17px; background: #f1f1f1; display: flex; align-items: center; padding: 0 6px; }
.hscroll i { width: 1098px; height: 13px; background: #c1c1c1; margin: 0 82px 0 6px; }
.widget { position: absolute; border-radius: 20px; }
.wt { font-size: 16px; line-height: 24px; letter-spacing: .03px; white-space: nowrap; }
.w1 { left: 38px; top: 38px; width: 452px; height: 271px; background: #fbf2d5; padding: 9px 10px 11px; }
.w1 .wt { padding-left: 8px; color: #453f2a; letter-spacing: -.02px; }
.w2 { left: 549px; top: 38px; width: 411px; height: 272px; background: #eec02e; }
.w3 { left: 313px; top: 339px; width: 427px; height: 260px; background: #7adf90; }
.whead { display: flex; padding: 9px 18px 0; height: 42px; color: #1a1c14; }
.whead .wt { flex: 1; }
.whead svg { margin: 3px 0 0 8px; }
.w3 .whead { height: 83px; color: #0c3018; }
.tablewrap { margin-top: 7px; height: 196px; overflow: hidden; border-radius: 0 0 12px 12px; font-size: 12px; letter-spacing: .04px; color: #5c573f; }
.thead { width: 414px; height: 32px; display: grid; grid-template-columns: 138px 138px 138px; background: #f4f4f4; border: 1px solid #dcdcdc; border-bottom: 0; color: #333; line-height: 34px; }
.thead span { padding-left: 8px; border-right: 1px solid #dcdcdc; white-space: nowrap; }
.thead span:last-child { border: 0; }
.trows { display: flex; }
.grid { width: 414px; display: grid; grid-template-columns: 138px 138px 138px; grid-auto-rows: 32px; border: 1px solid #dcdcdc; border-top: 0; }
.grid span { padding-left: 8px; border-right: 1px solid #dcdcdc; border-bottom: 1px solid #dcdcdc; line-height: 34px; }
.grid .g2 { grid-row: span 2; line-height: 64px; border-bottom-color: #fbf2d5; }
.grid .num { text-align: right; padding-right: 10px; border-right: 0; letter-spacing: .3px; }
.grid .sum { grid-column: span 2; background: #f4f4f4; font-weight: 700; color: #222; border-top: 1px solid #161616; border-bottom: 1px solid #161616; margin-top: -1px; letter-spacing: .3px; line-height: 32px; }
.grid .sumn { background: #f4f4f4; border-top: 1px solid #161616; border-bottom: 1px solid #161616; margin-top: -1px; color: #444; line-height: 32px; }
.tv { height: 164px; padding-top: 7px; }
.tv i { width: 13px; height: 67px; background: #c1c1c1; margin-top: 5px; }
.end { margin: auto 0 7px; }
.chart text { font-size: 12px; }
.chart .al, .chart .al text { fill: #7d7760; font-size: 11.500px; }
.w3 .chart .al { fill: #677a6c; }
.chart .at { fill: #161616; }
.chart .sl { font-size: 9px; fill: #66806d; }

/* properties */
.props { width: 320px; border-left: 1px solid #e4e4e4; display: flex; background: #fff; }
.plist { width: 302px; color: #333; font-size: 14px; padding-right: 10px; }
.ptitle { padding: 11px 0 0 8px; line-height: 20px; font-weight: 500; letter-spacing: .3px; }
.acc { height: 50px; display: flex; align-items: center; gap: 9px; font-weight: 500; padding: 0 0 8px 9px; letter-spacing: .2px; }
.acc svg { position: relative; top: 4px; }
.acc.first { height: 43px; padding-bottom: 0; align-items: flex-start; padding-top: 11px; line-height: 20px; }
.acc.first svg { top: 5px; }
.plist hr { margin: 0 13px 0 24px; border: 0; border-top: 1px solid #efefef; }
.plist hr.tight { margin-top: 2px; }
.prow { display: flex; justify-content: space-between; padding: 8px 0 0 10px; height: 44px; line-height: 20px; }
.prow > span:first-child { margin-top: -3px; letter-spacing: .02px; }
.r-lay { height: 62px; padding-top: 26px; }
.r-pre { height: 36px; }
.psub { font-weight: 500; height: 39px; padding: 11px 0 0 10px; line-height: 20px; letter-spacing: .18px; }
.psub.long { height: 40px; }
.sel { height: 22px; border: 1px solid #767676; background: #f4f4f4; color: #000; display: flex; align-items: center; justify-content: space-between; padding: 0 4px; letter-spacing: .1px; }
.s1 { width: 81px; }
.s2 { width: 95px; }
.s3 { width: 101px; }
.trow { height: 44px; display: flex; align-items: center; justify-content: space-between; padding-left: 10px; letter-spacing: .02px; }
.tog { width: 45px; height: 24px; border-radius: 12px; background: #555; display: flex; align-items: center; padding-left: 3px; }
.tog b { width: 20px; height: 20px; border-radius: 50%; background: #fff; }
.tog.on { background: #2a5aa4; padding-left: 8px; }
.tog.on b { margin-left: 1px; }
.dis { color: #c6c6c6; height: 56px; letter-spacing: .2px; }
.dis .tog { background: #d4d4d4; }
.dims { display: flex; gap: 23px; padding-left: 10px; height: 84px; color: #525252; letter-spacing: .15px; }
.dims label { width: 131px; padding-top: 12px; line-height: 20px; flex: none; display: block; }
.dims label + label { margin-left: -3px; }
.dims label > span { display: block; margin: 10px 0 0 3px; width: 128px; height: 26px; line-height: 19px; background: #f4f4f4; border-bottom: 1px solid #8d8d8d; color: #6f6f6f; padding-left: 2px; }
.pv { height: 857px; padding-top: 7px; }
.pv i { width: 13px; height: 780px; background: #c1c1c1; margin-top: 5px; }

/* taskbar */
.taskbar { height: 48px; flex: none; border-top: 1px solid #abb79d; display: flex; align-items: center; padding-left: 606px; background: linear-gradient(90deg, #d3eebf 0%, #dbe9b8 8%, #d2ecc4 18%, #d6ecbb 30%, #d8eebb 45%, #dcecb4 56%, #ecdfb8 62%, #e0ecac 67%, #dcecaa 73%, #d8eabb 80%, #e2e8c6 84%, #d8e9cd 92%, #d3e9cd 100%); font-family: "Noto Sans", sans-serif; }
.task { width: 44px; height: 38px; display: flex; align-items: center; justify-content: center; position: relative; }
.win { margin-right: 4px; }
.run::after { content: ""; position: absolute; bottom: 0; left: 19px; width: 6px; height: 3px; border-radius: 2px; background: #8b8d7e; }
.active { width: 38px; margin: 0 3px; background: #f1f6e2; border-radius: 4px; border: 1px solid #e0e8c8; }
.active svg { margin-top: -5px; }
.active::after { width: 16px; left: 10px; background: #0078d4; bottom: -1px; }
.clap::after { width: 24px; left: 10px; background: #9a5b0c; }
.clap svg { margin: -6px 0 0 4px; }
.search { width: 218px; height: 30px; margin-right: 3px; border-radius: 15px; background: #f3f9ec; border-bottom: 1px solid #b8c8a8; display: flex; align-items: center; padding: 0 5px 0 10px; }
.search span { flex: 1; margin: -1px 0 0 9px; font-size: 14px; letter-spacing: -.5px; color: #555; }
.wd { font: 700 10px "Liberation Sans", sans-serif; fill: #fff; }
.ck { font: 9px Roboto, sans-serif; fill: #fff; }
.n { font: 700 11px "Liberation Sans", sans-serif; }
.tray { margin-left: auto; display: flex; align-items: center; font-size: 12px; line-height: 16px; letter-spacing: -.1px; color: #1c1c1c; padding-right: 20px; }
.lang { text-align: center; margin: 0 17px 0 19px; }
.spk { margin-left: 6px; }
.clock { text-align: right; width: 70px; margin-left: 8px; }
.two { width: 16px; height: 16px; border-radius: 50%; background: #0067c0; color: #fff; font-size: 10px; text-align: center; margin-left: 7px; }
```
